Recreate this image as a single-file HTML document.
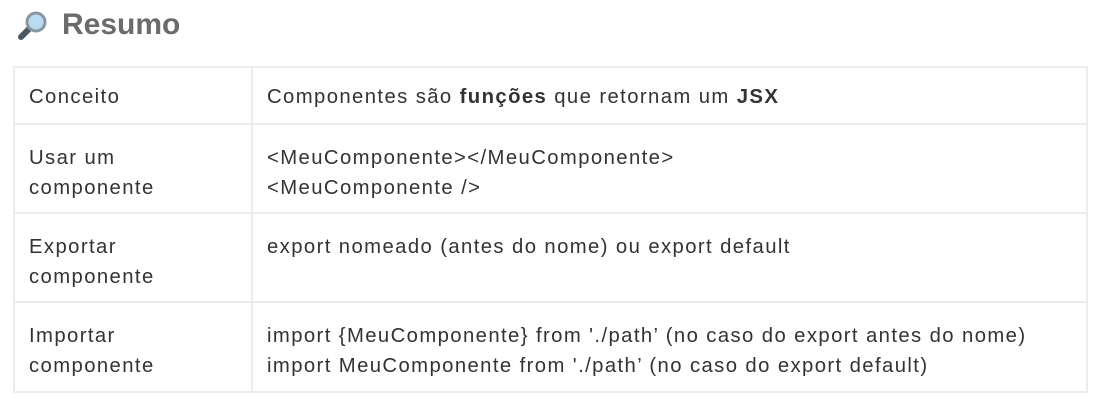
<!DOCTYPE html>
<html><head><meta charset="utf-8"><style>
body{margin:0;background:#fff;width:1101px;height:403px;overflow:hidden;font-family:"Liberation Sans",sans-serif;color:#333}
h2{position:absolute;left:62px;top:4px;margin:0;font-size:30px;font-weight:bold;color:#6b6b6b;line-height:42px}
svg{position:absolute;left:16px;top:10px}
table{position:absolute;left:13px;top:66px;width:1075px;border-collapse:collapse}
td{border:2px solid #ececec;vertical-align:top;font-size:20.3px;letter-spacing:1.4px;line-height:30px;padding:18px 14px 0 14px;box-sizing:border-box;white-space:nowrap}
td:first-child{width:238px}
</style></head><body>
<svg width="34" height="32" viewBox="0 0 34 32"><line x1="5" y1="27" x2="13" y2="19" stroke="#4c5860" stroke-width="6" stroke-linecap="round"/><circle cx="20" cy="12" r="9" fill="#b9dcf2" stroke="#8a969e" stroke-width="3"/></svg>
<h2>Resumo</h2>
<table>
<tr style="height:57px"><td style="padding-top:14px">Conceito</td><td style="padding-top:14px">Componentes são <b>funções</b> que retornam um <b>JSX</b></td></tr>
<tr style="height:89px"><td>Usar um<br>componente</td><td>&lt;MeuComponente&gt;&lt;/MeuComponente&gt;<br>&lt;MeuComponente /&gt;</td></tr>
<tr style="height:89px"><td>Exportar<br>componente</td><td>export nomeado (antes do nome) ou export default</td></tr>
<tr style="height:90px"><td>Importar<br>componente</td><td>import {MeuComponente} from './path’ (no caso do export antes do nome)<br>import MeuComponente from './path’ (no caso do export default)</td></tr>
</table>
</body></html>
